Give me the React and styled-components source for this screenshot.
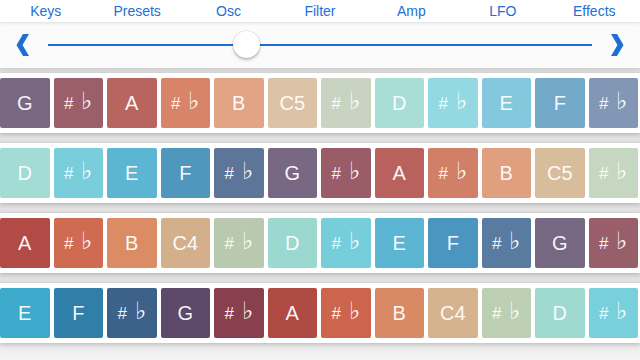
import React from 'react';
import styled, { createGlobalStyle } from 'styled-components';

const GlobalStyle = createGlobalStyle`
  html, body {
    margin: 0;
    padding: 0;
    background: #f4f4f4;
    font-family: "Liberation Sans", Arial, sans-serif;
    overflow: hidden;
  }
`;

const tabs = ['Keys', 'Presets', 'Osc', 'Filter', 'Amp', 'LFO', 'Effects'];

const rows = [
  [
    ['G', '#7a6883'], ['sf', '#9b5f69'], ['A', '#b9655f'], ['sf', '#d7846a'],
    ['B', '#e3a486'], ['C5', '#dcc2a6'], ['sf', '#c8d4c1'], ['D', '#a9ded6'],
    ['sf', '#93d9e2'], ['E', '#84c8dd'], ['F', '#73a9c8'], ['sf', '#8197b5'],
  ],
  [
    ['D', '#a2dcd4'], ['sf', '#7acddb'], ['E', '#5cb5d2'], ['F', '#4f97bd'],
    ['sf', '#5d7599'], ['G', '#786883'], ['sf', '#9a5d68'], ['A', '#b9625d'],
    ['sf', '#d17f66'], ['B', '#e0a07f'], ['C5', '#d8bd9c'], ['sf', '#c5d7c1'],
  ],
  [
    ['A', '#b24a45'], ['sf', '#ce6b50'], ['B', '#db8c65'], ['C4', '#d3b08b'],
    ['sf', '#b9c9af'], ['D', '#9bd8cf'], ['sf', '#77cedb'], ['E', '#5cb6d3'],
    ['F', '#4b96c0'], ['sf', '#5a7ba0'], ['G', '#766883'], ['sf', '#985f6a'],
  ],
  [
    ['E', '#3eaacb'], ['F', '#2f7fa9'], ['sf', '#3d628a'], ['G', '#5d4a6a'],
    ['sf', '#88404f'], ['A', '#b04b43'], ['sf', '#cc654b'], ['B', '#d98a64'],
    ['C4', '#d5b38e'], ['sf', '#bdcfb2'], ['D', '#9dd9cf'], ['sf', '#79d0dd'],
  ],
];

const Screen = styled.div`
  width: 640px;
  height: 360px;
  display: flex;
  flex-direction: column;
  overflow: hidden;
`;

const TabBar = styled.nav`
  flex: none;
  height: 22px;
  display: grid;
  grid-template-columns: repeat(7, 1fr);
  align-items: center;
  background: #fff;
  position: relative;
  z-index: 2;
  box-shadow: 0 1px 3px rgba(0, 0, 0, 0.12);
`;

const Tab = styled.span`
  text-align: center;
  font-size: 14px;
  color: #1b6fd6;
  line-height: 22px;
`;

const SliderBar = styled.div`
  flex: none;
  height: 46px;
  display: flex;
  align-items: center;
  gap: 19px;
  padding: 0 16px;
  background: #fbfbfb;
  position: relative;
  z-index: 1;
  box-shadow: 0 2px 3px rgba(0, 0, 0, 0.1);
`;

const Chevron = styled.svg`
  width: 13px;
  height: 24px;
  flex: none;
`;

const Track = styled.div`
  flex: 1;
  height: 2px;
  background: #1b6fd6;
  position: relative;
`;

const Thumb = styled.div`
  position: absolute;
  top: 50%;
  left: 185px;
  width: 27px;
  height: 27px;
  margin-top: -14px;
  border-radius: 50%;
  background: #fff;
  box-shadow: 0 2px 3px rgba(0, 0, 0, 0.25), 0 0 0 0.5px rgba(0, 0, 0, 0.12);
`;

const Rows = styled.div`
  flex: 1;
  display: flex;
  flex-direction: column;
  padding-top: 5px;
  gap: 10px;
  background: linear-gradient(#e2e2e2, #e2e2e2 90%, #f4f4f4);
`;

const Panel = styled.div`
  flex: none;
  background: #fff;
  padding: 5px 2px 5px 0;
  display: grid;
  grid-template-columns: repeat(12, 1fr);
  gap: 4px;
  box-shadow: 0 2px 4px rgba(0, 0, 0, 0.18), 0 -1px 2px rgba(0, 0, 0, 0.06);
`;

const Key = styled.div`
  height: 50px;
  border-radius: 2px;
  background: ${(p) => p.$color};
  color: rgba(255, 255, 255, 0.95);
  display: flex;
  align-items: center;
  justify-content: center;
  font-size: 20px;
  font-weight: 300;
`;

const SharpFlat = styled.span`
  display: flex;
  align-items: baseline;
  gap: 8px;
  margin-top: -3px;
`;

const Sharp = styled.span`
  font-family: "Liberation Sans", Arial, sans-serif;
  font-size: 17px;
`;

const Flat = styled.span`
  font-family: "DejaVu Sans", sans-serif;
  font-size: 24px;
  line-height: 1;
`;

export default function App() {
  return (
    <Screen>
      <GlobalStyle />
      <TabBar>
        {tabs.map((t) => (
          <Tab key={t}>{t}</Tab>
        ))}
      </TabBar>
      <SliderBar>
        <Chevron viewBox="0 0 13 24">
          <polygon points="7,1 13,1 6.5,12 13,23 7,23 0.5,12" fill="#1b6fd6" />
        </Chevron>
        <Track>
          <Thumb />
        </Track>
        <Chevron viewBox="0 0 13 24">
          <polygon points="6,1 0,1 6.5,12 0,23 6,23 12.5,12" fill="#1b6fd6" />
        </Chevron>
      </SliderBar>
      <Rows>
        {rows.map((row, i) => (
          <Panel key={i}>
            {row.map(([label, color], j) => (
              <Key key={j} $color={color}>
                {label === 'sf' ? (
                  <SharpFlat>
                    <Sharp>#</Sharp>
                    <Flat>♭</Flat>
                  </SharpFlat>
                ) : (
                  label
                )}
              </Key>
            ))}
          </Panel>
        ))}
      </Rows>
    </Screen>
  );
}
